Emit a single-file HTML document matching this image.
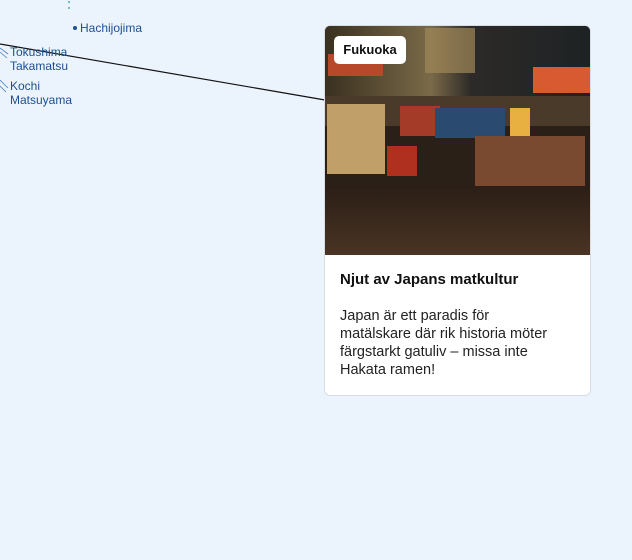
<!DOCTYPE html>
<html><head><meta charset="utf-8"><style>
body{margin:0;width:632px;height:560px;background:#ebf4fd;font-family:"Liberation Sans",sans-serif;position:relative;overflow:hidden}
.lbl{position:absolute;color:#1d4f91;font-size:12px;line-height:14px}
.card{position:absolute;left:324px;top:25px;width:265px;height:369px;background:#fff;border:1px solid #d8dde3;border-radius:6px;overflow:hidden}
.img{position:absolute;left:0;top:0;width:265px;height:229px;background:#2a2018;overflow:hidden}
.img div{position:absolute}
.tag{position:absolute;left:9px;top:10px;width:72px;height:28px;background:#fff;border-radius:5px;font-size:13px;font-weight:bold;line-height:28px;text-align:center;color:#111}
h3{position:absolute;left:15px;top:245px;margin:0;font-size:15px;font-weight:bold;color:#111}
p{position:absolute;left:15px;top:281px;margin:0;width:222px;font-size:14.5px;line-height:18px;color:#222}
</style></head><body>
<svg width="632" height="560" style="position:absolute;left:0;top:0">
<line x1="0" y1="44" x2="325" y2="100" stroke="#111" stroke-width="1.2"/>
<circle cx="75" cy="28" r="2" fill="#1d4f91"/>
<circle cx="69" cy="2" r="1" fill="#4ab"/><circle cx="69" cy="8" r="1" fill="#4ab"/>
<path d="M0 48 L8 54 M0 52 L7 58 M0 80 L8 88 M0 86 L6 92" stroke="#4a7fb5" stroke-width="0.8"/>
</svg>
<div class="lbl" style="left:80px;top:21px">Hachijojima</div>
<div class="lbl" style="left:10px;top:45px">Tokushima</div>
<div class="lbl" style="left:10px;top:59px">Takamatsu</div>
<div class="lbl" style="left:10px;top:79px">Kochi</div>
<div class="lbl" style="left:10px;top:93px">Matsuyama</div>
<div class="card">
<div class="img">
<div style="left:0;top:0;width:265px;height:70px;background:linear-gradient(90deg,#3a3020,#7a6a48 40%,#2d2a28 55%,#1e2224)"></div>
<div style="left:100px;top:2px;width:50px;height:45px;background:#a08858;opacity:.7"></div>
<div style="left:3px;top:28px;width:55px;height:22px;background:#b8482a"></div>
<div style="left:208px;top:41px;width:58px;height:26px;background:#d85a30"></div>
<div style="left:0;top:70px;width:265px;height:30px;background:#4a3a2a"></div>
<div style="left:2px;top:78px;width:58px;height:70px;background:#c0a068"></div>
<div style="left:75px;top:80px;width:40px;height:30px;background:#a43a28"></div>
<div style="left:110px;top:82px;width:70px;height:30px;background:#2a4a70"></div>
<div style="left:185px;top:82px;width:20px;height:30px;background:#e8b040"></div>
<div style="left:62px;top:120px;width:30px;height:30px;background:#b03020"></div>
<div style="left:150px;top:110px;width:110px;height:50px;background:#7a4a30"></div>
<div style="left:0;top:160px;width:265px;height:69px;background:linear-gradient(#2a1e16,#4a3424)"></div>
<div class="tag">Fukuoka</div>
</div>
<h3>Njut av Japans matkultur</h3>
<p>Japan är ett paradis för matälskare där rik historia möter färgstarkt gatuliv – missa inte Hakata ramen!</p>
</div>
</body></html>
